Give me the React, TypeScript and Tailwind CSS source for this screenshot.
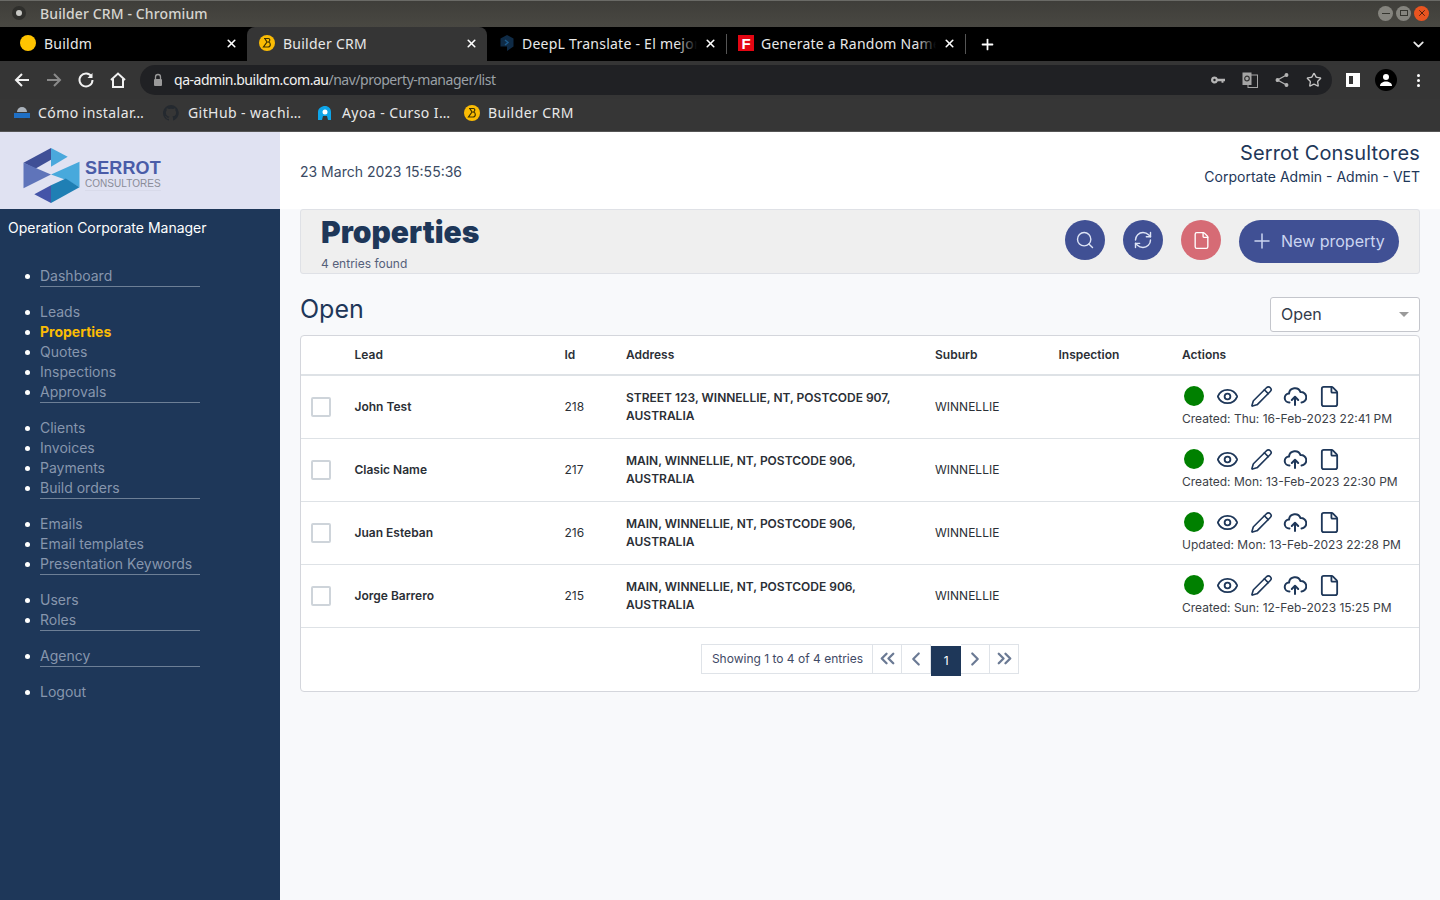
import { ChevronDown, ChevronLeft, ChevronRight, ChevronsLeft, ChevronsRight, Eye, File, Pencil, Plus, RefreshCw, Search, Star, X } from 'lucide-react';

const chromeFont = "font-['Noto_Sans',sans-serif]";

const navGroups = [
  ['Dashboard'],
  ['Leads', 'Properties', 'Quotes', 'Inspections', 'Approvals'],
  ['Clients', 'Invoices', 'Payments', 'Build orders'],
  ['Emails', 'Email templates', 'Presentation Keywords'],
  ['Users', 'Roles'],
  ['Agency'],
];

const rows = [
  { lead: 'John Test', id: 218, address: ['STREET 123, WINNELLIE, NT, POSTCODE 907,', 'AUSTRALIA'], stamp: 'Created: Thu: 16-Feb-2023 22:41 PM' },
  { lead: 'Clasic Name', id: 217, address: ['MAIN, WINNELLIE, NT, POSTCODE 906,', 'AUSTRALIA'], stamp: 'Created: Mon: 13-Feb-2023 22:30 PM' },
  { lead: 'Juan Esteban', id: 216, address: ['MAIN, WINNELLIE, NT, POSTCODE 906,', 'AUSTRALIA'], stamp: 'Updated: Mon: 13-Feb-2023 22:28 PM' },
  { lead: 'Jorge Barrero', id: 215, address: ['MAIN, WINNELLIE, NT, POSTCODE 906,', 'AUSTRALIA'], stamp: 'Created: Sun: 12-Feb-2023 15:25 PM' },
];

function BuilderIcon() {
  return (
    <svg width="16" height="16" viewBox="0 0 16 16" className="shrink-0">
      <circle cx="8" cy="8" r="8" fill="#fbbc04" />
      <path d="M5 3.500h4.500c1.500 0 2 2.500 0 3.500 2.500.7 2.500 5-.5 5H4.500L8 7 5.800 3.500" fill="none" stroke="#3a3000" strokeWidth="1.200" />
    </svg>
  );
}

function Tab({ icon, title, active, width, fade, gap = 'ml-2' }: { icon: React.ReactNode; title: string; active?: boolean; width: string; fade?: boolean; gap?: string }) {
  return (
    <div className={`relative flex h-[34px] items-center rounded-t-[8px] pb-[2px] ${width} ${active ? 'bg-[#353535]' : ''}`}>
      <span className="ml-3 flex w-4 shrink-0 justify-center">{icon}</span>
      <div className={`relative flex-1 overflow-hidden text-[14px] tracking-[0.25px] whitespace-nowrap text-[#e8e8e8] ${gap}`}>
        {title}
        {fade && <div className="absolute inset-y-0 right-0 w-5 bg-gradient-to-r from-transparent to-black" />}
      </div>
      <X size={13} strokeWidth={3} className="mr-[9px] ml-[7px] shrink-0 text-white" />
    </div>
  );
}

function BrowserChrome() {
  return (
    <div className={`shrink-0 ${chromeFont}`}>
      <div className="flex h-[27px] items-center border-t border-[#6a6a66] bg-gradient-to-b from-[#3f3e3a] to-[#494842] pb-[2px] pl-3 pr-[11px]">
        <span className="flex h-[14px] w-[14px] items-center justify-center rounded-full bg-[#2f2f2c]">
          <span className="h-[6px] w-[6px] rounded-full bg-[#c8c8c4]" />
        </span>
        <span className="ml-[14px] text-[14px] font-medium tracking-[0.12px] text-[#d6d5d0]">Builder CRM - Chromium</span>
        <div className="ml-auto flex items-center gap-[3px]">
          <span className="flex h-[15px] w-[15px] items-center justify-center rounded-full bg-[#85847e]"><span className="h-px w-2 bg-[#35352f]" /></span>
          <span className="flex h-[15px] w-[15px] items-center justify-center rounded-full bg-[#85847e]"><span className="h-[6px] w-2 border border-[#35352f]" /></span>
          <span className="flex h-[15px] w-[15px] items-center justify-center rounded-full bg-[#e95420]"><X size={10} strokeWidth={2.200} className="text-[#4b1d0c]" /></span>
        </div>
      </div>

      <div className="flex h-[34px] items-center bg-black pl-2">
        <Tab width="w-[239px]" title="Buildm" icon={<span className="h-4 w-4 rounded-full bg-[#ffc400]" />} />
        <Tab width="w-[240px]" active title="Builder CRM" icon={<BuilderIcon />} />
        <Tab width="w-[239px]" fade gap="ml-[7px]" title="DeepL Translate - El mejor" icon={
          <svg width="14" height="16" viewBox="0 0 14 16"><path d="M7 0l6.500 3.500v8L7 16v-4.500L.5 11.500v-8z" fill="#0f2b46" /><path d="M5 5l3 2.500L5 10" fill="none" stroke="#1e5a8a" strokeWidth="1.500" /></svg>
        } />
        <div className="h-5 w-px bg-[#555]" />
        <Tab width="w-[238px]" fade gap="ml-[6px]" title="Generate a Random Name" icon={
          <span className="-ml-[2px] flex h-4 w-4 items-center justify-center bg-[#e30613] font-['Liberation_Sans',sans-serif] text-[15px] leading-none font-bold text-white">F</span>
        } />
        <div className="h-5 w-px bg-[#555]" />
        <Plus size={17} strokeWidth={2.500} className="ml-[13px] text-white" />
        <ChevronDown size={17} strokeWidth={2.500} className="mr-[13px] ml-auto text-[#e8e8e8]" />
      </div>

      <div className="flex h-[38px] items-center bg-[#353535] pr-[14px]">
        <svg width="18" height="18" viewBox="0 0 18 18" className="ml-[13px]" fill="none" stroke="#f1f1f1" strokeWidth="2"><path d="M16 9H3M9 3L3 9l6 6" /></svg>
        <svg width="18" height="18" viewBox="0 0 18 18" className="ml-[14px]" fill="none" stroke="#8a8a8a" strokeWidth="2"><path d="M2 9h13M9 3l6 6-6 6" /></svg>
        <svg width="18" height="18" viewBox="0 0 18 18" className="ml-[14px]" fill="none" stroke="#f1f1f1" strokeWidth="2"><path d="M14.500 5.500A6.500 6.500 0 1 0 15.500 9" /><path d="M15.500 2v5h-5" fill="#f1f1f1" stroke="none" /></svg>
        <svg width="18" height="18" viewBox="0 0 18 18" className="ml-[14px]" fill="none" stroke="#f1f1f1" strokeWidth="2"><path d="M2 9l7-6.500L16 9M4 8v8h10V8" /></svg>
        <div className="ml-[13px] flex h-[30px] w-[1192px] items-center rounded-full bg-[#202124]">
          <svg width="12" height="14" viewBox="0 0 12 14" className="ml-3" fill="#9a9a9a"><rect x="2" y="6" width="8" height="7" rx="1" /><path d="M3.500 6V4a2.500 2.500 0 0 1 5 0v2" fill="none" stroke="#9a9a9a" strokeWidth="1.300" /></svg>
          <span className="ml-[10px] pb-[2px] text-[14px] tracking-[-0.48px] text-[#f1f1f1]">qa-admin.buildm.com.au<span className="text-[#9aa0a6]">/nav/property-manager/list</span></span>
          <div className="ml-auto flex items-center gap-[16px] pr-[10px]">
            <svg width="16" height="16" viewBox="0 0 16 16" fill="#b5b5b5"><path fillRule="evenodd" d="M4.500 4.500a3.500 3.500 0 0 1 3.300 2.300H15v2.500h-1.500v1.500h-2V9.300H7.800A3.500 3.500 0 1 1 4.500 4.500zm0 2.300a1.200 1.200 0 1 0 0 2.400 1.200 1.200 0 0 0 0-2.400z" /></svg>
            <svg width="16" height="16" viewBox="0 0 16 16"><rect x="6" y="3" width="9.500" height="12.500" fill="none" stroke="#a5a5a5" /><rect x=".5" y=".5" width="9" height="12.500" fill="#a5a5a5" /><circle cx="5" cy="6.500" r="2.300" fill="none" stroke="#353535" strokeWidth="1.200" /></svg>
            <svg width="16" height="16" viewBox="0 0 16 16" fill="#b5b5b5" stroke="#b5b5b5" strokeWidth="1.300"><path d="M12.500 3L3.500 8l9 5" fill="none" /><circle cx="12.500" cy="3" r="1.300" /><circle cx="3.500" cy="8" r="1.300" /><circle cx="12.500" cy="13" r="1.300" /></svg>
            <Star size={16} strokeWidth={2} className="text-[#c4c4c4]" />
          </div>
        </div>
        <div className="ml-[14px] h-[14px] w-[14px] border-[3px] border-r-[7px] border-white" />
        <span className="ml-[15px] flex h-[22px] w-[22px] items-center justify-center rounded-full bg-black">
          <svg width="14" height="14" viewBox="0 0 14 14" fill="#fff"><circle cx="7" cy="4" r="3" /><path d="M1 13c0-3 3-4.500 6-4.500s6 1.500 6 4.500z" /></svg>
        </span>
        <span className="ml-5 flex flex-col gap-[2px]">
          <span className="h-[3px] w-[3px] rounded-full bg-white" />
          <span className="h-[3px] w-[3px] rounded-full bg-white" />
          <span className="h-[3px] w-[3px] rounded-full bg-white" />
        </span>
      </div>

      <div className="flex h-[33px] items-center border-b border-[#555] bg-[#363636] pb-[5px] pl-[14px] text-[14px] tracking-[0.42px] whitespace-nowrap text-[#e8e8e8]">
        <div className="flex w-[149px] items-center">
          <svg width="16" height="16" viewBox="0 0 16 16"><path d="M3 7a5 5 0 0 1 10 0z" fill="#aab2bb" /><rect y="8" width="16" height="5" fill="#1f6fc4" /><rect x="2" y="13" width="3" height="2" fill="#333" /><rect x="11" y="13" width="3" height="2" fill="#333" /></svg>
          <span className="ml-2">Cómo instalar…</span>
        </div>
        <div className="flex w-[154px] items-center">
          <svg width="16" height="16" viewBox="0 0 16 16" fill="#24292f"><path d="M8 0a8 8 0 0 0-2.500 15.600c.4.1.5-.2.500-.4v-1.400c-2.200.5-2.700-1-2.700-1-.4-.9-.9-1.200-.9-1.200-.7-.5.1-.5.100-.5.800.1 1.200.8 1.200.8.700 1.200 1.900.9 2.300.7.100-.5.300-.9.500-1.100-1.800-.2-3.600-.9-3.600-4 0-.9.300-1.600.8-2.100-.1-.2-.4-1 .1-2.100 0 0 .7-.2 2.200.8a7.500 7.500 0 0 1 4 0c1.500-1 2.200-.8 2.200-.8.400 1.100.2 1.900.1 2.100.5.600.8 1.300.8 2.100 0 3.100-1.900 3.700-3.700 3.900.3.300.6.800.6 1.500v2.200c0 .2.100.5.500.4A8 8 0 0 0 8 0z" /></svg>
          <span className="ml-[9px]">GitHub - wachi…</span>
        </div>
        <div className="flex w-[147px] items-center">
          <svg width="16" height="16" viewBox="0 0 16 16"><path d="M8 1c3.500 0 6 2.500 6 6v8h-3l-1-4H6l-1 4H1V7c0-3.500 3.500-6 7-6z" fill="#0ea5e9" /><circle cx="8" cy="7" r="2.500" fill="#fff" /></svg>
          <span className="ml-[9px]">Ayoa - Curso I…</span>
        </div>
        <BuilderIcon />
        <span className="ml-2">Builder CRM</span>
      </div>
    </div>
  );
}

function Logo() {
  return (
    <div className="flex h-[77px] shrink-0 items-center bg-[#e0e2f2] pt-[6px] pl-[23px]">
      <svg width="57" height="55" viewBox="0 0 57 56" className="mt-[4px] shrink-0">
        <polygon points="0,15 28,0 28,12 12,21" fill="#3f4f96" />
        <polygon points="28,0 45,9 28,19" fill="#4aa8dc" />
        <polygon points="0,15 28,27 0,41" fill="#5f74ba" />
        <polygon points="57,14 57,40 45,33 28,27" fill="#48a9dc" />
        <polygon points="28,56 11,47 28,38" fill="#4454a8" />
        <polygon points="28,38 43,31 57,40 28,56" fill="#1f7fb4" />
      </svg>
      <div className="mt-[3px] ml-[5px] font-['Liberation_Sans',sans-serif]">
        <div className="text-[18px] leading-[19px] tracking-[0.15px] font-bold text-[#4a5ca8]">SERROT</div>
        <div className="border-b border-[#d8daea] pb-px text-[10px] leading-[11px] tracking-[0.05px] text-[#8a8c98]">CONSULTORES</div>
      </div>
    </div>
  );
}

function Sidebar() {
  return (
    <aside className="flex w-[280px] shrink-0 flex-col bg-[#1e3759]">
      <Logo />
      <div className="pt-[10px] pl-2 text-[14px] leading-[18px] text-white">Operation Corporate Manager</div>
      <nav className="mt-[29px]">
        {[...navGroups, ['Logout']].map((group, i) => (
          <ul key={i} className="mb-[15px] ml-10 w-40 border-b border-[#6d7f96] last:border-none">
            {group.map((item) => (
              <li key={item} className={`relative h-5 text-[14px] leading-5 whitespace-nowrap ${item === 'Properties' ? 'font-bold text-[#fbbc04]' : 'text-[#8796ad]'}`}>
                <span className="absolute top-[8px] -left-[15px] h-[5px] w-[5px] rounded-full bg-white" />
                {item}
              </li>
            ))}
          </ul>
        ))}
      </nav>
    </aside>
  );
}

function RoundButton({ children, color }: { children: React.ReactNode; color: string }) {
  return <div className={`flex h-10 w-10 items-center justify-center rounded-full text-[#dce3f5] ${color}`}>{children}</div>;
}

function PropertiesTable() {
  return (
    <div className="mt-[3px] rounded-[4px] border border-[#d4d6dc] bg-white">
      <table className="w-full table-fixed border-collapse text-left text-[12px] text-[#2b2f36]">
        <colgroup>
          <col className="w-[53.500px]" />
          <col className="w-[210px]" />
          <col className="w-[61.500px]" />
          <col className="w-[309px]" />
          <col className="w-[123.500px]" />
          <col className="w-[123.500px]" />
          <col />
        </colgroup>
        <thead>
          <tr className="h-[39px] border-b-2 border-[#dee2e6] font-semibold">
            <th />
            <th className="font-semibold">Lead</th>
            <th className="font-semibold">Id</th>
            <th className="font-semibold">Address</th>
            <th className="font-semibold">Suburb</th>
            <th className="font-semibold">Inspection</th>
            <th className="font-semibold">Actions</th>
          </tr>
        </thead>
        <tbody>
          {rows.map((row) => (
            <tr key={row.id} className="h-[63px] border-b border-[#dee2e6]">
              <td className="pl-[10px]">
                <div className="h-5 w-5 rounded-[2px] border-2 border-[#ced4da] bg-white" />
              </td>
              <td className="font-semibold">{row.lead}</td>
              <td>{row.id}</td>
              <td className="leading-[18px] font-semibold">
                {row.address.map((line) => <div key={line} className="whitespace-nowrap">{line}</div>)}
              </td>
              <td>WINNELLIE</td>
              <td />
              <td className="pb-[2px] leading-[16px]">
                <div className="flex h-[24px] items-center text-[#1e3759]">
                  <span className="ml-[2px] h-5 w-5 rounded-full bg-[#008000]" />
                  <Eye size={23} strokeWidth={1.900} className="ml-[12px]" />
                  <Pencil size={23} strokeWidth={1.700} className="ml-[11px]" />
                  <svg width="24" height="24" viewBox="0 0 24 24" className="ml-[10px]" fill="none" stroke="currentColor" strokeWidth="2" strokeLinecap="round" strokeLinejoin="round">
                    <path d="M6.500 18.500a4.500 4.500 0 0 1-.5-9 6 6 0 0 1 11.500-1.500 5.200 5.200 0 0 1 1 10.500" />
                    <path d="M12 21v-8M8.800 16l3.200-3.200 3.200 3.200" />
                  </svg>
                  <File size={23} strokeWidth={1.900} className="ml-[11px]" />
                </div>
                <div className="mt-[3px] whitespace-nowrap text-[#3c4148]">{row.stamp}</div>
              </td>
            </tr>
          ))}
        </tbody>
      </table>
      <div className="flex h-[63px] items-start justify-center pt-4 text-[12px]">
        <div className="flex h-[30px] items-center border border-[#dfe3e8] pr-[9px] pl-[10px] text-[#3f4a66]">Showing 1 to 4 of 4 entries</div>
        <div className="flex h-[30px] w-[29px] items-center justify-center border-y border-r border-[#dfe3e8] text-[#6b7a94]"><ChevronsLeft size={23} strokeWidth={2.400} /></div>
        <div className="flex h-[30px] w-[29px] items-center justify-center border-y border-r border-[#dfe3e8] text-[#6b7a94]"><ChevronLeft size={22} strokeWidth={2.400} /></div>
        <div className="mt-[2px] flex h-[30px] w-[30px] items-center justify-center bg-[#1e3759] text-white">1</div>
        <div className="flex h-[30px] w-[29px] items-center justify-center border-y border-r border-[#dfe3e8] text-[#6b7a94]"><ChevronRight size={22} strokeWidth={2.400} /></div>
        <div className="flex h-[30px] w-[29px] items-center justify-center border-y border-r border-[#dfe3e8] text-[#6b7a94]"><ChevronsRight size={23} strokeWidth={2.400} /></div>
      </div>
    </div>
  );
}

export default function App() {
  return (
    <div className="flex h-[900px] w-[1440px] flex-col overflow-hidden font-['Inter',sans-serif]">
      <BrowserChrome />
      <div className="flex flex-1">
        <Sidebar />
        <main className="flex-1 bg-[#f8f9fb]">
          <header className="flex h-[77px] justify-between bg-white px-5">
            <div className="pt-[31px] text-[14px] leading-[18px] text-[#3a4a63]">23 March 2023 15:55:36</div>
            <div className="pt-2 text-right">
              <div className="text-[20px] leading-[26px] tracking-[0.15px] text-[#1e3759]">Serrot Consultores</div>
              <div className="mt-px text-[14px] leading-[20px] text-[#1e3759]">Corportate Admin - Admin - VET</div>
            </div>
          </header>
          <div className="px-5">
            <section className="flex h-[65px] items-center justify-between rounded-[3px] border border-[#dfe1e6] bg-[#efefef] px-5">
              <div className="pt-[2px]">
                <h1 className="text-[30px] leading-[36px] font-black text-[#1e3759]">Properties</h1>
                <p className="mt-[6px] text-[12px] leading-[16px] text-[#55607a]">4 entries found</p>
              </div>
              <div className="-mt-[3px] flex items-center">
                <RoundButton color="bg-[#405094]"><Search size={20} strokeWidth={1.700} /></RoundButton>
                <div className="ml-[18px]"><RoundButton color="bg-[#405094]"><RefreshCw size={20} strokeWidth={1.700} /></RoundButton></div>
                <div className="ml-[18px]"><RoundButton color="bg-[#d66b75]"><File size={19} strokeWidth={1.700} className="text-white" /></RoundButton></div>
                <div className="mt-[2px] ml-[18px] flex h-[43px] w-[160px] items-center rounded-full bg-[#405094] pl-[11px] text-[16px] text-[#cbd5f0]">
                  <Plus size={24} strokeWidth={1.500} />
                  <span className="ml-[7px]">New property</span>
                </div>
              </div>
            </section>
            <div className="mt-[23px] flex items-start justify-between">
              <h2 className="text-[25px] leading-[24px] text-[#1e3759]">Open</h2>
              <div className="flex h-[35px] w-[150px] items-center justify-between rounded-[3px] border border-[#c4c6cc] bg-white pr-[10px] pb-[2px] pl-[10px] text-[16px] text-[#333b4a]">
                Open
                <span className="mt-[2px] h-0 w-0 border-x-[5px] border-t-[5px] border-x-transparent border-t-[#9a9a9a]" />
              </div>
            </div>
            <PropertiesTable />
          </div>
        </main>
      </div>
    </div>
  );
}
